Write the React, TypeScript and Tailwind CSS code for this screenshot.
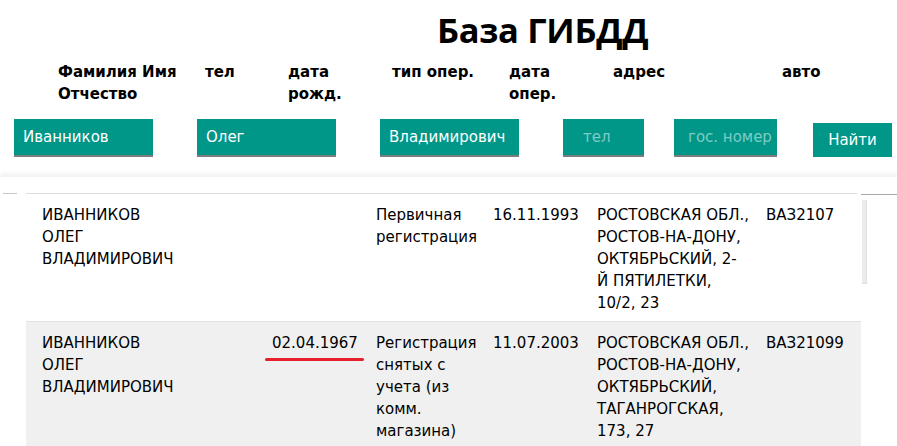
import React from "react";

type Rec = {
  name: string[];
  birth: string;
  op: string[];
  opDate: string;
  addr: string[];
  car: string;
};

const rows: Rec[] = [
  {
    name: ["ИВАННИКОВ", "ОЛЕГ", "ВЛАДИМИРОВИЧ"],
    birth: "",
    op: ["Первичная", "регистрация"],
    opDate: "16.11.1993",
    addr: ["РОСТОВСКАЯ ОБЛ.,", "РОСТОВ-НА-ДОНУ,", "ОКТЯБРЬСКИЙ, 2-", "Й ПЯТИЛЕТКИ,", "10/2, 23"],
    car: "ВАЗ2107",
  },
  {
    name: ["ИВАННИКОВ", "ОЛЕГ", "ВЛАДИМИРОВИЧ"],
    birth: "02.04.1967",
    op: ["Регистрация", "снятых с", "учета (из", "комм.", "магазина)"],
    opDate: "11.07.2003",
    addr: ["РОСТОВСКАЯ ОБЛ.,", "РОСТОВ-НА-ДОНУ,", "ОКТЯБРЬСКИЙ,", "ТАГАНРОГСКАЯ,", "173, 27"],
    car: "ВАЗ21099",
  },
];

const Lines = ({ items }: { items: string[] }) => (
  <>
    {items.map((s, i) => (
      <div key={i} className="whitespace-nowrap">
        {s}
      </div>
    ))}
  </>
);

const Field = ({ w, pad, value, placeholder }: { w: string; pad: string; value?: string; placeholder?: string }) => (
  <div className={`${w} ${pad} h-[38px] bg-[#009688] border-b-2 border-[#7d7d7d] flex items-center`}>
    {value ? (
      <span className="text-white">{value}</span>
    ) : (
      <span className="text-[#7ccdc4] whitespace-nowrap">{placeholder}</span>
    )}
  </div>
);

export default function App() {
  return (
    <div className="w-[897px] h-[446px] overflow-hidden bg-white text-black font-['DejaVu_Sans',Verdana,sans-serif] text-[15px] leading-[22px]">
      <div className="pl-[437px] pt-[6px] h-[56px]">
        <h1 className="font-['Open_Sans',sans-serif] font-bold text-[34.5px] leading-[48px] tracking-[-0.3px]">База ГИБДД</h1>
      </div>

      <div className="flex pl-[58px] font-bold text-[15px] leading-[22px] h-[62px] pt-[5px]">
        <div className="w-[147px]">Фамилия Имя Отчество</div>
        <div className="w-[83px]">тел</div>
        <div className="w-[104px]">дата<br />рожд.</div>
        <div className="w-[117px]">тип опер.</div>
        <div className="w-[104px]">дата<br />опер.</div>
        <div className="w-[169px]">адрес</div>
        <div>авто</div>
      </div>

      <div className="flex items-start pl-[14px] h-[58px] pt-px">
        <Field w="w-[139px]" pad="pl-[9px]" value="Иванников" />
        <div className="w-[44px]" />
        <Field w="w-[139px]" pad="pl-[9px]" value="Олег" />
        <div className="w-[44px]" />
        <Field w="w-[139px]" pad="pl-[9px]" value="Владимирович" />
        <div className="w-[44px]" />
        <Field w="w-[81px]" pad="pl-[20px]" placeholder="тел" />
        <div className="w-[30px]" />
        <Field w="w-[103px]" pad="pl-[14px]" placeholder="гос. номер" />
        <div className="w-[36px]" />
        <button className="mt-[4px] w-[79px] h-[34px] bg-[#009688] text-white text-[15px]">Найти</button>
      </div>

      <div className="shadow-[0_-3px_4px_rgba(0,0,0,0.05)] border-t border-[#f3f3f3] pt-[16px]">
        <div className="flex">
          <div className="w-[26px] pl-[3px]">
            <div className="w-[14px] h-px bg-[#c8c8c8]" />
          </div>
          <div className="w-[835px] relative">
            <div className="h-px bg-[#dcdcdc] mr-[4px]" />
            {rows.map((r, i) => (
              <div
                key={i}
                className={`grid grid-cols-[148px_82px_104px_117px_104px_169px_1fr] pl-[16px] pt-[10px] pb-[7px] ${
                  i % 2 ? "bg-[#f0f0f0] border-t border-[#e2e2e2]" : "bg-white"
                }`}
              >
                <div><Lines items={r.name} /></div>
                <div />
                <div className="relative">
                  {r.birth && (
                    <>
                      <span className="whitespace-nowrap">{r.birth}</span>
                      <div className="absolute left-[-7px] top-[26px] w-[99px] h-[3px] rounded-full bg-[#e5202a]" />
                    </>
                  )}
                </div>
                <div><Lines items={r.op} /></div>
                <div>{r.opDate}</div>
                <div><Lines items={r.addr} /></div>
                <div>{r.car}</div>
              </div>
            ))}
          </div>
          <div className="flex-1 pt-px">
            <div className="h-px bg-[#a9a9a9]" />
            <div className="ml-[1px] mt-[5px] w-[5px] h-[84px] bg-[#ececec] border-r border-b border-[#e0e0e0]" />
          </div>
        </div>
      </div>
    </div>
  );
}
